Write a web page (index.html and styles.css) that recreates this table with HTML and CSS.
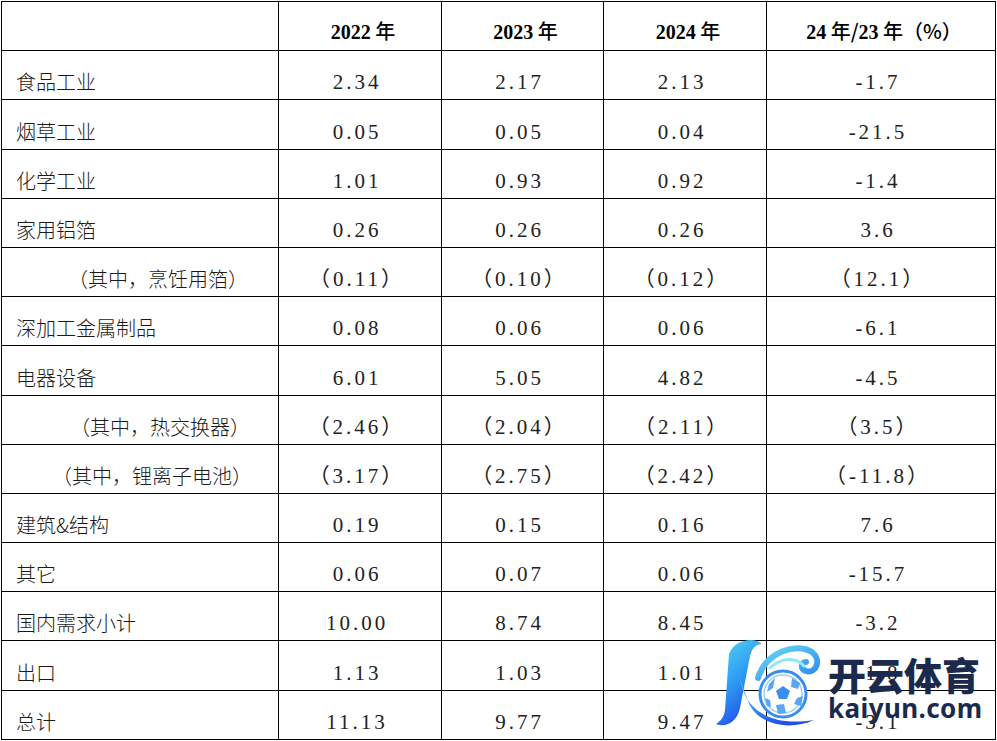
FILE: index.html
```html
<!DOCTYPE html>
<html lang="zh-CN">
<head>
<meta charset="utf-8">
<title>铝箔需求</title>
<link rel="stylesheet" href="styles.css">
</head>
<body>
<div class="page">
  <div class="grid">
    <div class="cell head"></div>
    <div class="cell head"><span><span class="lat">2022</span> 年</span></div>
    <div class="cell head"><span><span class="lat">2023</span> 年</span></div>
    <div class="cell head"><span><span class="lat">2024</span> 年</span></div>
    <div class="cell head"><span><span class="lat">24</span> 年/<span class="lat">23</span> 年（%）</span></div>

    <div class="cell label">食品工业</div>
    <div class="cell val">2.34</div><div class="cell val">2.17</div><div class="cell val">2.13</div><div class="cell val">-1.7</div>

    <div class="cell label">烟草工业</div>
    <div class="cell val">0.05</div><div class="cell val">0.05</div><div class="cell val">0.04</div><div class="cell val">-21.5</div>

    <div class="cell label">化学工业</div>
    <div class="cell val">1.01</div><div class="cell val">0.93</div><div class="cell val">0.92</div><div class="cell val">-1.4</div>

    <div class="cell label">家用铝箔</div>
    <div class="cell val">0.26</div><div class="cell val">0.26</div><div class="cell val">0.26</div><div class="cell val">3.6</div>

    <div class="cell label sub-a">（其中，烹饪用箔）</div>
    <div class="cell val">（0.11）</div><div class="cell val">（0.10）</div><div class="cell val">（0.12）</div><div class="cell val">（12.1）</div>

    <div class="cell label">深加工金属制品</div>
    <div class="cell val">0.08</div><div class="cell val">0.06</div><div class="cell val">0.06</div><div class="cell val">-6.1</div>

    <div class="cell label">电器设备</div>
    <div class="cell val">6.01</div><div class="cell val">5.05</div><div class="cell val">4.82</div><div class="cell val">-4.5</div>

    <div class="cell label sub-b">（其中，热交换器）</div>
    <div class="cell val">（2.46）</div><div class="cell val">（2.04）</div><div class="cell val">（2.11）</div><div class="cell val">（3.5）</div>

    <div class="cell label sub-c">（其中，锂离子电池）</div>
    <div class="cell val">（3.17）</div><div class="cell val">（2.75）</div><div class="cell val">（2.42）</div><div class="cell val">（-11.8）</div>

    <div class="cell label">建筑&amp;结构</div>
    <div class="cell val">0.19</div><div class="cell val">0.15</div><div class="cell val">0.16</div><div class="cell val">7.6</div>

    <div class="cell label">其它</div>
    <div class="cell val">0.06</div><div class="cell val">0.07</div><div class="cell val">0.06</div><div class="cell val">-15.7</div>

    <div class="cell label">国内需求小计</div>
    <div class="cell val">10.00</div><div class="cell val">8.74</div><div class="cell val">8.45</div><div class="cell val">-3.2</div>

    <div class="cell label">出口</div>
    <div class="cell val">1.13</div><div class="cell val">1.03</div><div class="cell val">1.01</div><div class="cell val">-1.8</div>

    <div class="cell label">总计</div>
    <div class="cell val">11.13</div><div class="cell val">9.77</div><div class="cell val">9.47</div><div class="cell val">-3.1</div>
  </div>

  <svg class="watermark" width="280" height="92" viewBox="0 0 280 92" xmlns="http://www.w3.org/2000/svg">
    <defs>
      <linearGradient id="kg" x1="0" y1="0" x2="0.5" y2="1">
        <stop offset="0" stop-color="#52dcf3"/>
        <stop offset="0.55" stop-color="#2f9af2"/>
        <stop offset="1" stop-color="#1f4fee"/>
      </linearGradient>
      <linearGradient id="sg" x1="0" y1="0" x2="1" y2="1">
        <stop offset="0" stop-color="#6adcf5"/>
        <stop offset="1" stop-color="#2c86f0"/>
      </linearGradient>
    </defs>
    <!-- K left stroke -->
    <path d="M17 16 C22 2 42 -2 50 6 C44 6 40 10 38 18 L28 70 C25 84 14 90 4 86 C10 82 12 78 13 72 Z" fill="url(#kg)"/>
    <!-- K lower swoosh -->
    <path d="M28 38 C30 66 52 90 102 82 C76 94 42 86 35 60 C32 52 29 46 28 38 Z" fill="url(#kg)"/>
    <!-- swirl -->
    <path d="M46 40 C54 14 84 4 100 14 C110 22 104 36 94 33 C88 31 89 24 94 24" fill="none" stroke="url(#sg)" stroke-width="6" stroke-linecap="round"/>
    <path d="M58 30 C68 20 84 18 92 28" fill="none" stroke="#95e6f8" stroke-width="3" stroke-linecap="round"/>
    <!-- ball -->
    <circle cx="71" cy="56" r="23" fill="#ffffff" stroke="#3a8ef2" stroke-width="3"/>
    <circle cx="71" cy="56" r="19" fill="none" stroke="#9ad0f8" stroke-width="1.5"/>
    <polygon points="71,48 78,53 75,61 67,61 64,53" fill="#3a8ef2"/>
    <polygon points="57,46 63,40 61,50 55,54" fill="#5aa6f4"/>
    <polygon points="80,40 88,45 86,51 79,49" fill="#5aa6f4"/>
    <polygon points="85,60 91,58 89,68 82,66" fill="#5aa6f4"/>
    <polygon points="64,67 72,66 74,75 66,76" fill="#5aa6f4"/>
    <polygon points="53,60 58,62 59,69 55,68" fill="#5aa6f4"/>
    <text x="116" y="52" class="wm-cn">开云体育</text>
    <text x="116" y="80" class="wm-en" textLength="154">kaiyun.com</text>
  </svg>
</div>
</body>
</html>
```

FILE: styles.css
```css
html, body {
  margin: 0;
  padding: 0;
  background: #ffffff;
}

.page {
  position: relative;
  width: 997px;
  height: 741px;
  overflow: hidden;
}

.grid {
  margin: 1px 0 0 1px;
  display: grid;
  grid-template-columns: 277px 163px 162px 163px 229px;
  grid-auto-rows: 49.2px;
  width: 995px;
  border-left: 1px solid #000;
  border-top: 1px solid #000;
  box-sizing: border-box;
  font-family: "Noto Sans CJK SC", sans-serif;
  font-weight: 300;
  color: #1a1a1a;
}

.cell {
  border-right: 1px solid #000;
  border-bottom: 1px solid #000;
  box-sizing: border-box;
  display: flex;
  align-items: flex-end;
  padding-bottom: 5px;
  font-size: 20px;
  line-height: 24px;
  white-space: nowrap;
}

.head {
  justify-content: center;
  font-weight: 500;
  color: #000;
  padding-bottom: 6px;
  padding-left: 6px;
}

.head .lat {
  font-family: "Liberation Serif", serif;
  font-weight: 700;
  font-size: 20px;
}

.label {
  padding-left: 14px;
}

.sub-a { padding-left: 66px; }
.sub-b { padding-left: 68px; }
.sub-c { padding-left: 50px; }

.val {
  justify-content: center;
  font-family: "Liberation Serif", "Noto Sans CJK SC", serif;
  font-weight: 400;
  font-size: 21px;
  letter-spacing: 3px;
  padding-right: 6px;
  color: #222;
}

.watermark {
  position: absolute;
  left: 712px;
  top: 638px;
}

.wm-cn {
  font-family: "Noto Sans CJK SC", sans-serif;
  font-weight: 900;
  font-size: 38px;
  fill: #1b2a4c;
}

.wm-en {
  font-family: "Noto Sans", "DejaVu Sans", sans-serif;
  font-weight: 700;
  font-size: 26px;
  fill: #1b2a4c;
}
```
